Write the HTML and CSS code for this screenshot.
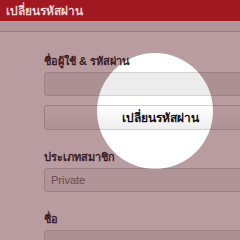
FILE: index.html
```html
<!DOCTYPE html>
<html lang="th">
<head>
    <meta charset="UTF-8">
    <meta name="viewport" content="width=device-width, initial-scale=1.0">
    <title>เปลี่ยนรหัสผ่าน</title>
    <link rel="stylesheet" href="styles.css">
</head>
<body>

    <div id="header">
        <div class="title">เปลี่ยนรหัสผ่าน</div>
    </div>
    <div id="sub-bar"></div>

    <div id="form">
        <div class="label">ชื่อผู้ใช้ &amp; รหัสผ่าน</div>
        <div class="field"></div>
        <button class="change-button">เปลี่ยนรหัสผ่าน</button>

        <div class="label label-gap">ประเภทสมาชิก</div>
        <div class="field select">Private</div>

        <div class="label label-gap">ชื่อ</div>
        <div class="field"></div>
    </div>

    <!-- ไฮไลต์ปุ่มเปลี่ยนรหัสผ่าน -->
    <div id="spotlight"></div>

</body>
</html>
```

FILE: styles.css
```css
body {
    margin: 0;
    width: 240px;
    height: 240px;
    overflow: hidden;
    background-color: #fff;
    font-family: "Liberation Sans", "DejaVu Sans", sans-serif;
    position: relative;
}

#header {
    position: relative;
    z-index: 2;
    height: 21px;
    background-color: #a11821;
    display: flex;
    align-items: center;
    padding-left: 6px;
}

#header .title {
    color: #ecd2d5;
    font-size: 12px;
    font-weight: bold;
}

#sub-bar {
    height: 9px;
    background-color: #f4f4f4;
    border-top: 1px solid #fff;
    border-bottom: 1px solid #c8c8c8;
}

#form {
    padding: 20px 0 0 44px;
    width: 232px;
}

.label {
    font-size: 11px;
    font-weight: bold;
    color: #2e2e2e;
    height: 20px;
}

.label-gap {
    margin-top: 18px;
}

.field {
    height: 22px;
    border: 1px solid #d2d2d2;
    border-radius: 3px;
    background-color: #ececec;
    box-sizing: content-box;
}

.select {
    background-color: #f2f2f2;
    color: #7a7a7a;
    font-size: 11px;
    display: flex;
    align-items: center;
    padding-left: 6px;
    margin-right: -6px;
}

.change-button {
    display: block;
    width: 232px;
    height: 25px;
    margin-top: 9px;
    border: 1px solid #cfcfcf;
    border-radius: 3px;
    background: linear-gradient(#ffffff, #eeeeee);
    font-family: inherit;
    font-size: 12px;
    font-weight: bold;
    color: #111;
    padding: 0;
}

#spotlight {
    position: absolute;
    left: 97px;
    top: 53px;
    width: 116px;
    height: 116px;
    border-radius: 50%;
    box-shadow: 0 0 0 400px rgba(77, 8, 17, 0.4);
    z-index: 1;
}
```
